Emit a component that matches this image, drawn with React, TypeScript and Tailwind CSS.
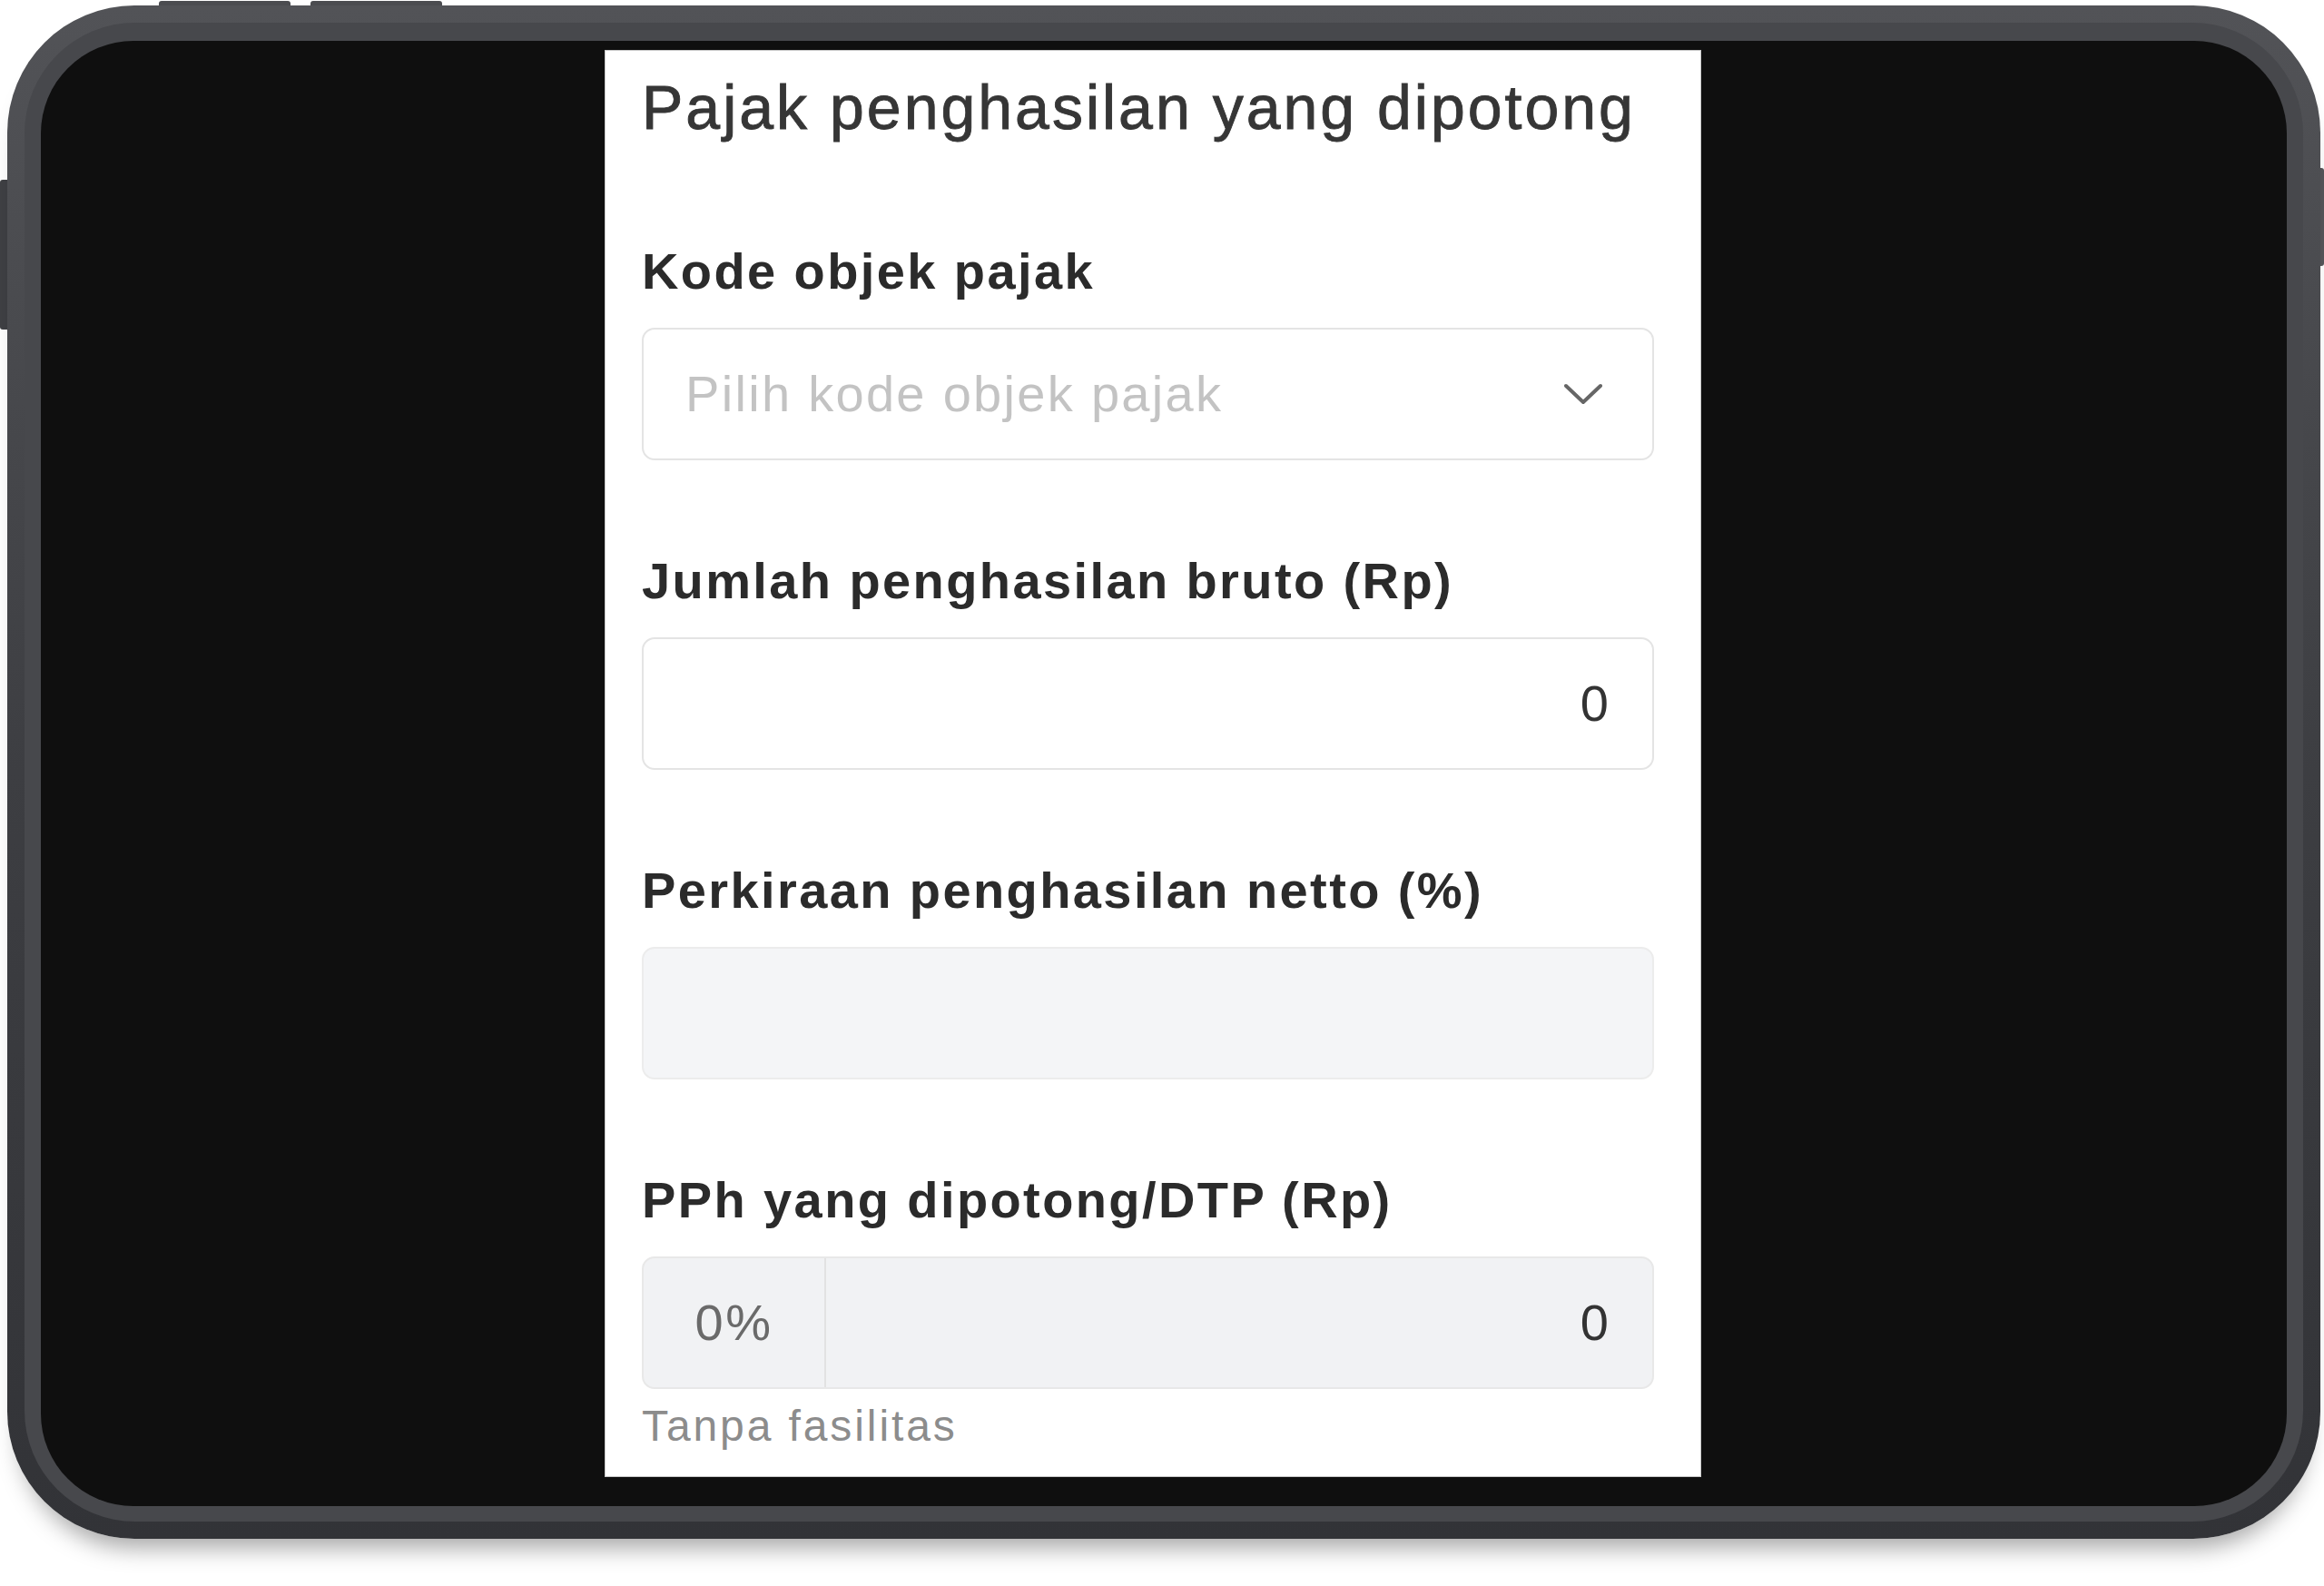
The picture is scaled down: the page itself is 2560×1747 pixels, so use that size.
import type { ReactNode } from 'react';

const font = { fontFamily: '"Liberation Sans", Arial, sans-serif' };

function Label({ children }: { children: ReactNode }) {
  return (
    <div className="h-[56px] text-[56px] leading-none font-bold tracking-[2.4px] text-[#2b2b2b] whitespace-nowrap">
      {children}
    </div>
  );
}

function Chevron() {
  return (
    <svg width="42" height="24" viewBox="0 0 42 24" fill="none" className="shrink-0">
      <polyline points="2,3 21,21 40,3" stroke="#666666" strokeWidth="4" strokeLinecap="round" strokeLinejoin="round" />
    </svg>
  );
}

function Field({ label, children, first }: { label: string; children: ReactNode; first?: boolean }) {
  return (
    <div className={first ? 'mt-[119px]' : 'mt-[105px]'}>
      <Label>{label}</Label>
      <div className="mt-[34px]">{children}</div>
    </div>
  );
}

export default function App() {
  return (
    <div className="relative min-h-screen bg-white pt-[6px] pl-[8px]" style={font}>
      {/* hardware buttons */}
      <div className="absolute left-[175px] top-[1px] w-[145px] h-[7px] rounded-t-[3px] bg-[#4b4c50]" />
      <div className="absolute left-[342px] top-[1px] w-[145px] h-[7px] rounded-t-[3px] bg-[#4b4c50]" />
      <div className="absolute left-0 top-[198px] w-[10px] h-[165px] rounded-l-[3px] bg-[#3f4044]" />
      <div className="absolute left-[2552px] top-[185px] w-[8px] h-[108px] rounded-r-[3px] bg-[#55565a]" />

      {/* device frame */}
      <div className="relative w-[2548px] h-[1689px] rounded-[140px] bg-gradient-to-b from-[#525357] via-[#3d3e42] to-[#323337] p-[19px] shadow-[0_24px_26px_-14px_rgba(0,0,0,0.35)]">
        <div className="w-full h-full rounded-[122px] bg-[#47484c] px-[18px] pt-[20px] pb-[17px]">
          <div className="w-full h-full rounded-[102px] bg-[#0f0f0f] overflow-hidden">
            {/* app panel */}
            <div className="ml-[621px] mt-[10px] w-[1208px] h-[1572px] bg-white border border-[#c9c9c9] pl-[40px] pr-[51px] pt-[28px]">
              <div className="h-[68px] text-[68px] leading-none tracking-[3px] text-[#363636] whitespace-nowrap [-webkit-text-stroke:0.9px_#363636]">
                Pajak penghasilan yang dipotong
              </div>

              <Field label="Kode objek pajak" first>
                <div className="h-[146px] rounded-[14px] border-2 border-[#e4e4e4] bg-white flex items-center justify-between pl-[46px] pr-[55px]">
                  <span className="text-[56px] leading-none tracking-[2.3px] text-[#c3c3c3]">Pilih kode objek pajak</span>
                  <Chevron />
                </div>
              </Field>

              <Field label="Jumlah penghasilan bruto (Rp)">
                <div className="h-[146px] rounded-[14px] border-2 border-[#e4e4e4] bg-white flex items-center justify-end pr-[46px]">
                  <span className="text-[56px] leading-none tracking-[2.2px] text-[#333333]">0</span>
                </div>
              </Field>

              <Field label="Perkiraan penghasilan netto (%)">
                <div className="h-[146px] rounded-[14px] border-2 border-[#ececec] bg-[#f4f5f7]" />
              </Field>

              <Field label="PPh yang dipotong/DTP (Rp)">
                <div className="h-[146px] rounded-[14px] border-2 border-[#e8e8e8] bg-[#f1f2f4] flex overflow-hidden">
                  <div className="w-[201px] shrink-0 border-r-2 border-[#e2e2e2] flex items-center justify-center">
                    <span className="text-[56px] leading-none tracking-[2.6px] text-[#6a6a6a]">0%</span>
                  </div>
                  <div className="flex-1 flex items-center justify-end pr-[46px]">
                    <span className="text-[56px] leading-none tracking-[2.2px] text-[#333333]">0</span>
                  </div>
                </div>
              </Field>

              <div className="mt-[17px] h-[48px] text-[48px] leading-none tracking-[2.9px] text-[#8c8c8c] whitespace-nowrap">
                Tanpa fasilitas
              </div>
            </div>
          </div>
        </div>
      </div>
    </div>
  );
}
